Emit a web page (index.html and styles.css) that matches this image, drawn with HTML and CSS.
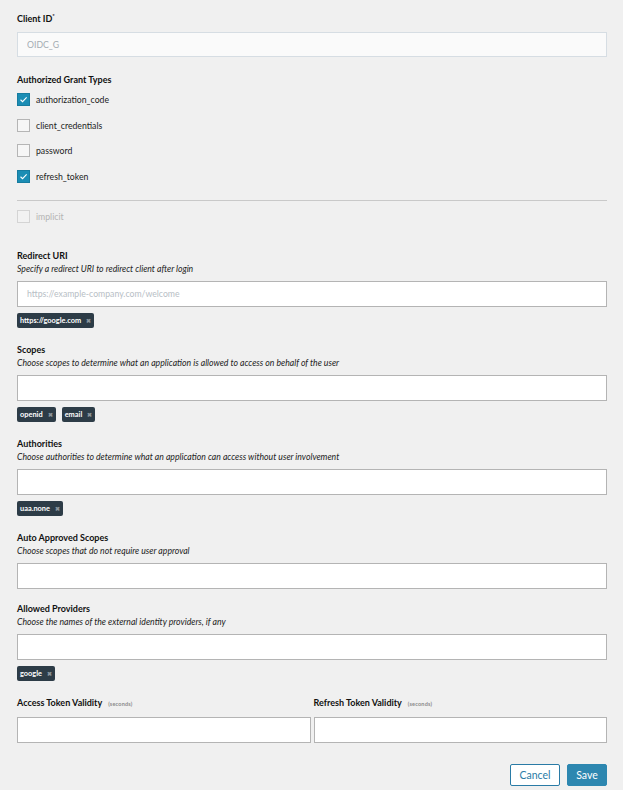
FILE: index.html
```html
<!DOCTYPE html>
<html>
<head>
<meta charset="utf-8">
<link rel="stylesheet" href="styles.css">
</head>
<body>
<form class="form">
  <div class="field">
    <div class="label">Client ID<sup>*</sup></div>
    <input class="input input-ro" value="OIDC_G" readonly>
  </div>

  <div class="grants">
    <div class="label">Authorized Grant Types</div>
    <div class="checks">
      <label class="check"><span class="box on"><svg viewBox="0 0 13 13"><path d="M3 6.8 L5.4 9 L10.2 4" /></svg></span>authorization_code</label>
      <label class="check"><span class="box"></span>client_credentials</label>
      <label class="check"><span class="box"></span>password</label>
      <label class="check"><span class="box on"><svg viewBox="0 0 13 13"><path d="M3 6.8 L5.4 9 L10.2 4" /></svg></span>refresh_token</label>
    </div>
    <hr class="divider">
    <label class="check disabled"><span class="box"></span>implicit</label>
  </div>

  <div class="field">
    <div class="label">Redirect URI</div>
    <div class="help">Specify a redirect URI to redirect client after login</div>
    <input class="input" placeholder="https://example-company.com/welcome">
    <div class="tags"><span class="tag">https://google.com<i>&#x2716;</i></span></div>
  </div>

  <div class="field">
    <div class="label">Scopes</div>
    <div class="help">Choose scopes to determine what an application is allowed to access on behalf of the user</div>
    <input class="input">
    <div class="tags"><span class="tag">openid<i>&#x2716;</i></span><span class="tag">email<i>&#x2716;</i></span></div>
  </div>

  <div class="field">
    <div class="label">Authorities</div>
    <div class="help">Choose authorities to determine what an application can access without user involvement</div>
    <input class="input">
    <div class="tags"><span class="tag">uaa.none<i>&#x2716;</i></span></div>
  </div>

  <div class="field">
    <div class="label">Auto Approved Scopes</div>
    <div class="help">Choose scopes that do not require user approval</div>
    <input class="input">
  </div>

  <div class="field">
    <div class="label">Allowed Providers</div>
    <div class="help">Choose the names of the external identity providers, if any</div>
    <input class="input">
    <div class="tags"><span class="tag">google<i>&#x2716;</i></span></div>
  </div>

  <div class="row">
    <div class="col">
      <div class="label">Access Token Validity <small>(seconds)</small></div>
      <input class="input">
    </div>
    <div class="col">
      <div class="label">Refresh Token Validity <small>(seconds)</small></div>
      <input class="input">
    </div>
  </div>

  <div class="actions">
    <button type="button" class="btn btn-cancel">Cancel</button>
    <button type="button" class="btn btn-save">Save</button>
  </div>
</form>
</body>
</html>
```
FILE: styles.css
```css
* { box-sizing: border-box; }
html, body { margin: 0; padding: 0; background: #f0f0f0; }
body {
  font-family: Lato, "Open Sans", sans-serif;
  font-size: 8.5px;
  color: #1b1b1b;
}
.form { padding: 12px 16px 0 17px; width: 623px; }
.label { font-weight: 700; font-size: 9px; line-height: 13px; height: 13px; color: #111; }
.label sup { font-size: 6px; vertical-align: top; line-height: 8px; }
.label small { font-size: 5.5px; color: #8a8a8a; font-weight: 700; margin-left: 4px; letter-spacing: 0.2px; }
.help { font-style: italic; font-size: 8.7px; line-height: 13px; height: 13px; color: #222; }
.input {
  display: block;
  width: 100%;
  height: 26px;
  margin: 5.5px 0 0;
  border: 1px solid #b4b4b4;
  background: #fff;
  padding: 0 9px;
  font-family: inherit;
  font-size: 8.7px;
  color: #333;
  outline: none;
}
.input::placeholder { color: #b7bec5; }
.input-ro { background: #fafafa; border-color: #d6dde3; color: #a4acb2; height: 25px; }
.field { margin-bottom: 13.5px; }
.field:first-child { margin-bottom: 16px; }
.field:first-child .input { margin-top: 7px; }
.grants { margin-bottom: 26.5px; }
.checks { display: flex; flex-direction: column; gap: 12.5px; margin-top: 7px; }
.check { display: flex; align-items: center; height: 13px; font-size: 8.7px; color: #222; }
.box {
  width: 13px; height: 13px;
  border: 1px solid #b5b5b5;
  background: #f6f6f6;
  margin-right: 6px;
  display: inline-flex;
}
.box.on { background: #1b8db4; border-color: #177c9f; }
.box svg { width: 11px; height: 11px; }
.box svg path { fill: none; stroke: #fff; stroke-width: 1.3; }
.disabled { color: #b4b4b4; }
.disabled .box { border-color: #d4d4d4; background: #f2f2f2; }
.divider { border: 0; border-top: 1px solid #c9c9c9; margin: 17px 0 9px; height: 0; }
.tags { display: flex; align-items: flex-start; gap: 6px; margin-top: 6px; padding-bottom: 2px; }
.tag {
  display: inline-flex; align-items: center;
  height: 15px;
  background: #2d3c47;
  color: #fff;
  font-weight: 700;
  font-size: 7.4px;
  padding: 0 3px 0 3px;
  border-radius: 2px;
}
.tag i { font-style: normal; color: #8c959c; font-size: 6px; margin-left: 5px; }
.row { display: flex; gap: 3px; }
.col { flex: 1; }
.col .input { margin-top: 7.5px; }
.actions { display: flex; justify-content: flex-end; gap: 7px; margin-top: 21px; }
.btn {
  height: 22px;
  font-family: inherit;
  font-size: 10.5px;
  border-radius: 2px;
  padding: 0 8px;
  cursor: pointer;
}
.btn-cancel { background: #fff; border: 1px solid #2a7ba6; color: #2a7ba6; width: 50px; }
.btn-save { background: #2d87b0; border: 1px solid #2d87b0; color: #fff; width: 40px; }
```
